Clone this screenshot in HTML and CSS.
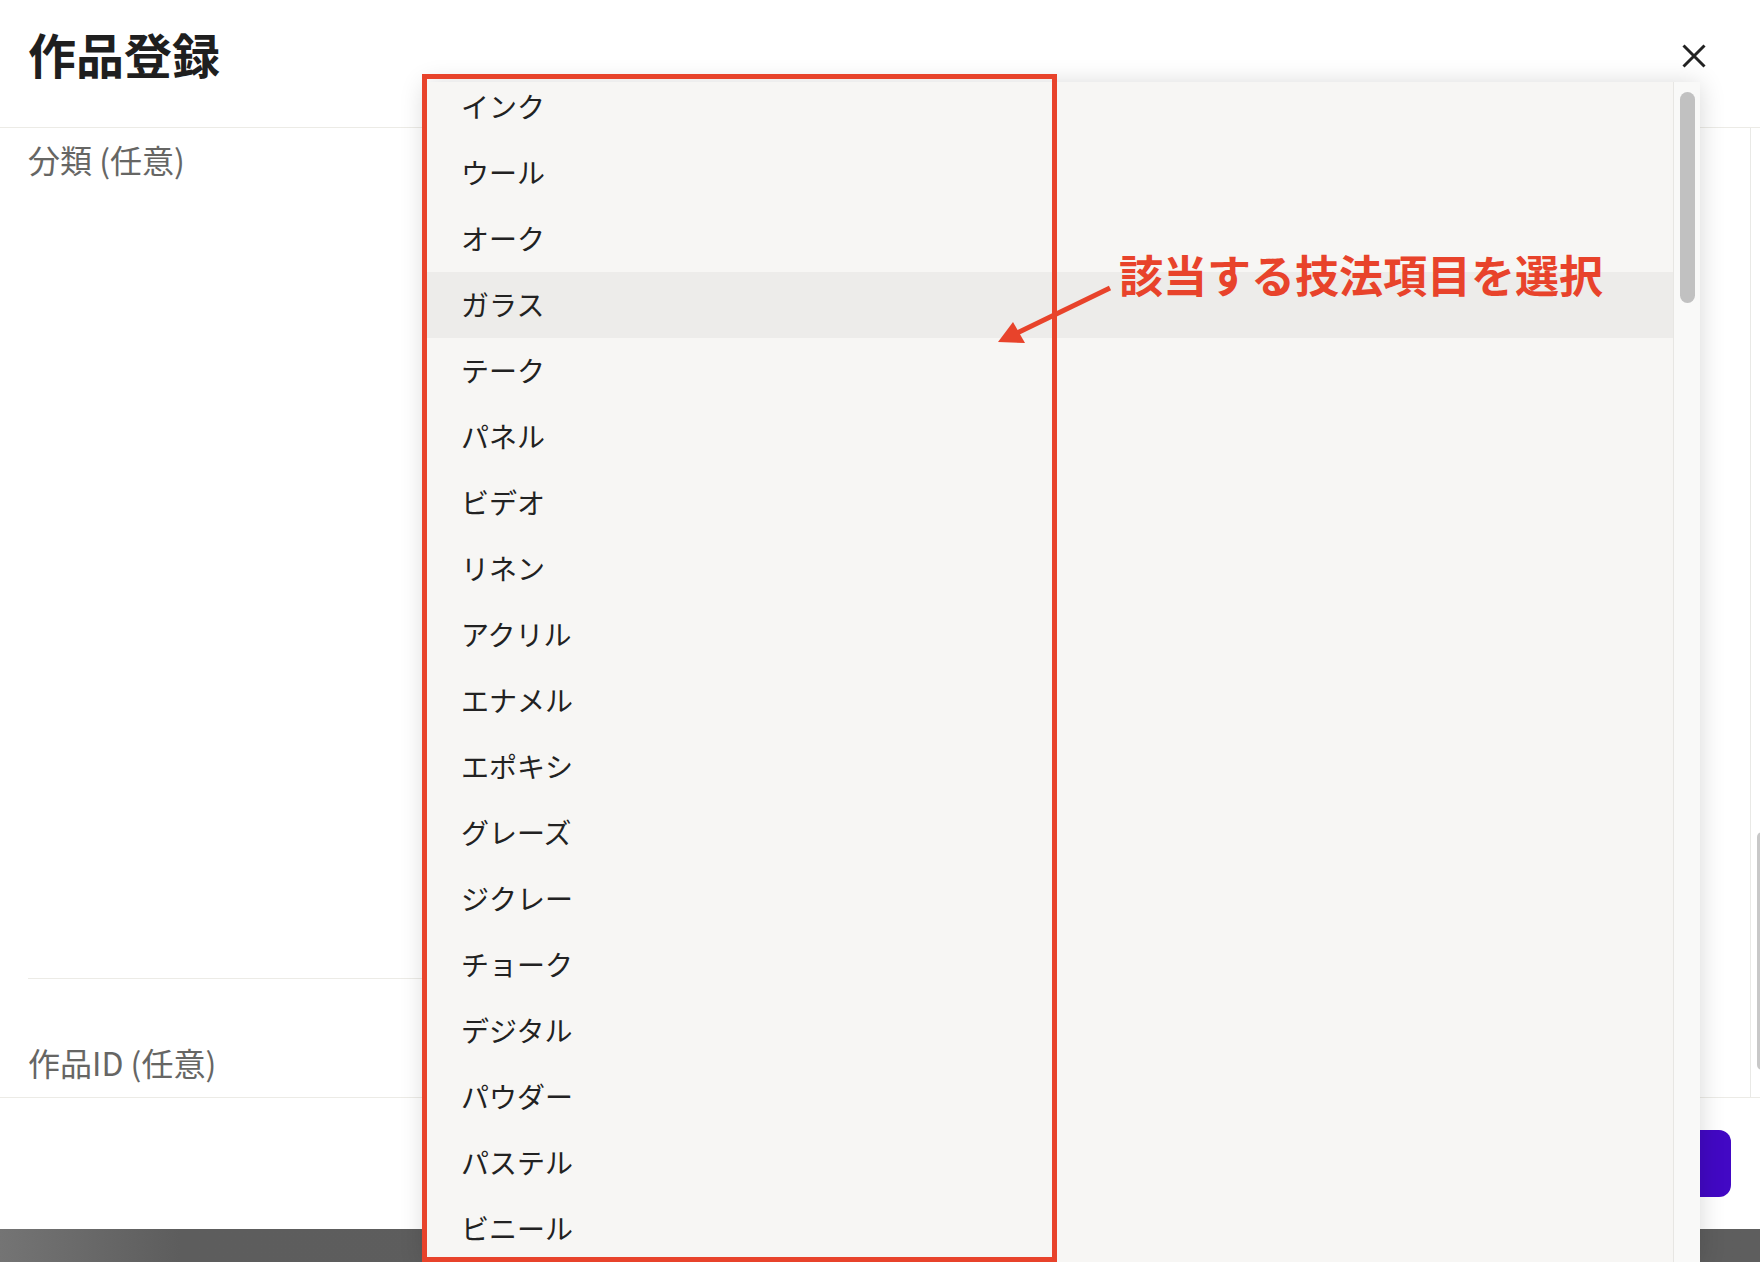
FILE: index.html
```html
<!DOCTYPE html>
<html lang="ja">
<head>
<meta charset="utf-8">
<title>作品登録</title>
<link rel="stylesheet" href="styles.css">
</head>
<body>
<div class="modal">
  <header class="modal-header">
    <h1 class="modal-title">作品登録</h1>
    <button class="close-btn" aria-label="閉じる">
      <svg width="24" height="24" viewBox="0 0 24 24"><path d="M1.5 1.5 L22.5 22.5 M22.5 1.5 L1.5 22.5" stroke="#222" stroke-width="3" fill="none"/></svg>
    </button>
  </header>
  <div class="modal-body">
    <div class="body-content">
      <section class="field field-category">
        <div class="field-label">分類 (任意)</div>
        <div class="field-slot"></div>
      </section>
      <section class="field field-id">
        <div class="field-label">作品ID (任意)</div>
      </section>
    </div>
    <div class="body-scroll"><div class="body-thumb"></div></div>
  </div>
  <footer class="modal-footer">
    <button class="primary-btn">登録する</button>
  </footer>
</div>

<div class="dropdown">
  <div class="dropdown-viewport">
    <ul class="dropdown-list">
      <li>インク</li>
      <li>ウール</li>
      <li>オーク</li>
      <li class="is-active">ガラス</li>
      <li>テーク</li>
      <li>パネル</li>
      <li>ビデオ</li>
      <li>リネン</li>
      <li>アクリル</li>
      <li>エナメル</li>
      <li>エポキシ</li>
      <li>グレーズ</li>
      <li>ジクレー</li>
      <li>チョーク</li>
      <li>デジタル</li>
      <li>パウダー</li>
      <li>パステル</li>
      <li>ビニール</li>
    </ul>
  </div>
  <div class="dropdown-scroll"><div class="dropdown-thumb"></div></div>
</div>

<div class="annot-box"></div>
<div class="annot-text">該当する技法項目を選択</div>
<svg class="annot-arrow" width="130" height="70" viewBox="0 0 130 70">
  <line x1="120" y1="8" x2="27" y2="53" stroke="#e8432b" stroke-width="5"/>
  <polygon points="8,62 23,42 35,63" fill="#e8432b"/>
</svg>
</body>
</html>
```

FILE: styles.css
```css
html, body {
  margin: 0;
  padding: 0;
}

body {
  width: 1760px;
  height: 1262px;
  overflow: hidden;
  position: relative;
  font-family: "Noto Sans CJK JP", "Noto Sans", sans-serif;
  background: linear-gradient(to right, #747474 0, #5d5d5d 180px, #5e5e5e 100%);
}

.modal {
  height: 1229px;
  background: #ffffff;
  display: flex;
  flex-direction: column;
}

.modal-header {
  box-sizing: border-box;
  height: 128px;
  border-bottom: 1px solid #ecebe6;
  display: flex;
  justify-content: space-between;
  align-items: flex-start;
  padding: 29px 54px 0 28px;
}

.modal-title {
  margin: 0;
  font-size: 48px;
  line-height: 48px;
  font-weight: 700;
  color: #1f1f1f;
}

.close-btn {
  margin-top: 15px;
  padding: 0;
  border: none;
  background: none;
  width: 24px;
  height: 24px;
  display: block;
}

.close-btn svg {
  display: block;
}

.modal-body {
  height: 969px;
  display: flex;
  overflow: hidden;
}

.body-content {
  flex: 1;
  padding: 0 60px 0 28px;
}

.field-label {
  font-size: 32px;
  line-height: 32px;
  color: #666664;
  white-space: nowrap;
}

.field-category {
  padding-top: 15px;
  border-bottom: 1px solid #ecebe6;
}

.field-slot {
  height: 803px;
}

.field-id {
  padding-top: 67px;
}

.body-scroll {
  box-sizing: border-box;
  width: 10px;
  border-left: 1px solid #e9e9e6;
  background: #ffffff;
  overflow: hidden;
}

.body-thumb {
  margin: 704px 0 0 6px;
  width: 10px;
  height: 238px;
  border-radius: 5px;
  background: #c8c8c8;
}

.modal-footer {
  box-sizing: border-box;
  height: 132px;
  border-top: 1px solid #ecebe6;
  display: flex;
  justify-content: flex-end;
  align-items: center;
  padding-right: 29px;
}

.primary-btn {
  height: 67px;
  width: 220px;
  border: none;
  border-radius: 12px;
  background: #4208c4;
  color: #ffffff;
  font-family: inherit;
  font-size: 28px;
  font-weight: 700;
}

/* dropdown overlay */
.dropdown {
  position: absolute;
  left: 425px;
  top: 82px;
  width: 1275px;
  height: 1180px;
  background: #f7f6f4;
  box-shadow: 0 2px 24px rgba(0, 0, 0, 0.16);
  display: flex;
  overflow: hidden;
}

.dropdown-viewport {
  flex: 1;
  overflow: hidden;
}

.dropdown-list {
  list-style: none;
  margin: -8px 0 0 0;
  padding: 0;
}

.dropdown-list li {
  height: 66px;
  line-height: 64px;
  padding-left: 36px;
  font-size: 28px;
  color: #222222;
}

.dropdown-list li.is-active {
  background: #edecea;
}

.dropdown-scroll {
  box-sizing: border-box;
  width: 27px;
  border-left: 1px solid #e7e6e3;
  background: #f9f9f8;
}

.dropdown-thumb {
  margin: 10px 0 0 6px;
  width: 15px;
  height: 211px;
  border-radius: 8px;
  background: #c1c1c1;
}

/* annotations */
.annot-box {
  position: absolute;
  left: 422px;
  top: 74px;
  width: 635px;
  height: 1188px;
  box-sizing: border-box;
  border: 5px solid #e8432b;
}

.annot-text {
  position: absolute;
  left: 1119px;
  top: 252px;
  font-size: 44px;
  line-height: 44px;
  font-weight: 700;
  color: #e8432b;
  white-space: nowrap;
}

.annot-arrow {
  position: absolute;
  left: 990px;
  top: 280px;
}
```
